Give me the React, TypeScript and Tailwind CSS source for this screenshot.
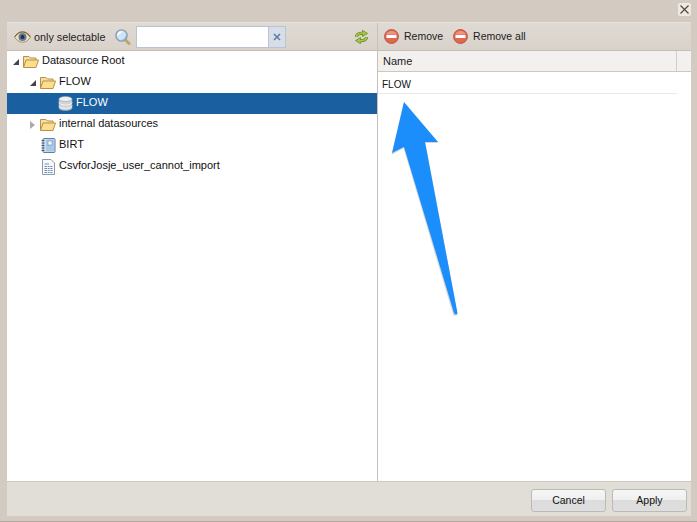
import { ReactNode } from 'react'

function Eye() {
  return (
    <svg width="17" height="12" viewBox="0 0 17 12">
      <path d="M0.5 6C3 2 6 0.8 8.5 0.8S14 2 16.5 6C14 10 11 11.2 8.5 11.2S3 10 0.5 6Z" fill="#f0e2c4" stroke="#a5824e" />
      <circle cx="8.5" cy="6" r="4" fill="#5b7f9c" />
      <circle cx="8.5" cy="6" r="2" fill="#26303a" />
      <path d="M1 5.5C3.5 2 6 1 8.5 1S13.5 2 16 5.5" fill="none" stroke="#7d5f32" strokeWidth="1.2" />
    </svg>
  )
}

function Magnifier() {
  return (
    <svg width="16" height="16" viewBox="0 0 16 16">
      <path d="M10.5 11L14 14.5" stroke="#c9a25e" strokeWidth="3" strokeLinecap="round" />
      <circle cx="6.5" cy="6.5" r="5.6" fill="#cfe4f7" stroke="#8d9cab" strokeWidth="1.4" />
      <path d="M3 6.5A3.5 3.5 0 0 1 6.5 3" fill="none" stroke="#ffffff" strokeWidth="1.4" />
      <path d="M6.5 11.3A4.8 4.8 0 0 0 11.3 6.5" fill="none" stroke="#7fb0de" strokeWidth="1.2" />
    </svg>
  )
}

function Refresh() {
  return (
    <svg width="13" height="14" viewBox="0 0 13 14">
      <path d="M1.5 7C1.5 4.5 3.5 3.2 8 3.2" fill="none" stroke="#5f7d1e" strokeWidth="3" />
      <path d="M7.5 0.3L12.5 3.4 7.5 6.5Z" fill="#a6c93f" stroke="#5f7d1e" strokeWidth="0.7" />
      <path d="M1.5 7C1.5 4.5 3.5 3.2 8 3.2" fill="none" stroke="#a6c93f" strokeWidth="1.7" />
      <path d="M11.5 7C11.5 9.5 9.5 10.8 5 10.8" fill="none" stroke="#5f7d1e" strokeWidth="3" />
      <path d="M5.5 7.5L0.5 10.6 5.5 13.7Z" fill="#a6c93f" stroke="#5f7d1e" strokeWidth="0.7" />
      <path d="M11.5 7C11.5 9.5 9.5 10.8 5 10.8" fill="none" stroke="#a6c93f" strokeWidth="1.7" />
    </svg>
  )
}

function RemoveIcon() {
  return (
    <svg width="15" height="15" viewBox="0 0 15 15">
      <circle cx="7.5" cy="7.5" r="6.9" fill="#e2674f" stroke="#b5533f" />
      <path d="M2 5.5A6 6 0 0 1 13 5.5Z" fill="#ee9480" />
      <rect x="2.5" y="6" width="10" height="3" fill="#ffffff" />
    </svg>
  )
}

function Folder() {
  return (
    <svg width="16" height="13" viewBox="0 0 16 13">
      <path d="M0.5 12V1.5H6L7.5 3H13V5" fill="#f5deA0" stroke="#bb8f45" />
      <path d="M0.5 12.5L3 5H15.5L13 12.5Z" fill="#fbdf8c" stroke="#bb8f45" />
    </svg>
  )
}

function Database() {
  return (
    <svg width="15" height="15" viewBox="0 0 15 15">
      <path d="M1 3V12C1 13.4 4 14.5 7.5 14.5S14 13.4 14 12V3Z" fill="#cfd3d6" stroke="#9ea4a8" strokeWidth="0.6" />
      <ellipse cx="7.5" cy="3" rx="6.5" ry="2.5" fill="#eef0f1" stroke="#9ea4a8" strokeWidth="0.6" />
      <path d="M1 6.5C1 8 4 9 7.5 9S14 8 14 6.5M1 9.7C1 11.2 4 12.2 7.5 12.2S14 11.2 14 9.7" fill="none" stroke="#f4f5f6" />
    </svg>
  )
}

function Report() {
  return (
    <svg width="15" height="15" viewBox="0 0 15 15">
      <rect x="2" y="0.5" width="12" height="14" rx="1" fill="#cfe0f2" stroke="#5e7ea3" />
      <rect x="5" y="1.5" width="8" height="12" fill="#a9c8e8" />
      <rect x="7" y="3" width="4" height="4" fill="#f4f8fc" stroke="#6d8cae" strokeWidth="0.6" />
      <path d="M0.5 2.5H3.5M0.5 5H3.5M0.5 7.5H3.5M0.5 10H3.5M0.5 12.5H3.5" stroke="#44586f" />
    </svg>
  )
}

function CsvFile() {
  return (
    <svg width="13" height="16" viewBox="0 0 13 16">
      <path d="M0.5 0.5H9L12.5 4V15.5H0.5Z" fill="#f8f9fb" stroke="#8d9aac" />
      <path d="M2.5 5H7M2.5 7.5H10.5M2.5 9.5H10.5M2.5 11.5H10.5M2.5 13.5H10.5" stroke="#6f8fb8" />
      <path d="M5.5 7V14M8 7V14" stroke="#f8f9fb" strokeWidth="0.7" />
    </svg>
  )
}

function TreeRow({ indent, toggle, icon, label, selected }: { indent: string; toggle?: 'open' | 'closed'; icon: ReactNode; label: string; selected?: boolean }) {
  return (
    <div className={`h-[21px] flex items-center ${indent} ${selected ? 'bg-[#1a5f9f] text-white' : 'text-[#111]'}`}>
      <span className="w-[11px] flex justify-center shrink-0">
        {toggle === 'open' && <span className="w-0 h-0 border-l-[6px] border-l-transparent border-b-[6px] border-b-[#444]" />}
        {toggle === 'closed' && <span className="w-0 h-0 border-y-[4px] border-y-transparent border-l-[5px] border-l-[#aaa]" />}
      </span>
      <span className="w-[16px] ml-[2px] flex justify-center shrink-0">{icon}</span>
      <span className="ml-[3px] mb-[2px]">{label}</span>
    </div>
  )
}

export default function App() {
  return (
    <div className="relative w-[697px] h-[522px] bg-[#d3cbc2] flex flex-col pl-[7px] pr-[6px] pb-[5px] text-[11px] font-['Liberation_Sans',Arial,sans-serif] overflow-hidden border-b border-[#b3a89c]">
      <div className="h-[22px] shrink-0 flex items-start justify-end pt-[3px]">
        <button className="w-[13px] h-[13px] bg-[#eee9e3] rounded-[2px] flex items-center justify-center">
          <svg width="9" height="9" viewBox="0 0 9 9">
            <path d="M0.5 0.5L8.5 8.5M8.5 0.5L0.5 8.5" stroke="#54483c" strokeWidth="1.2" />
          </svg>
        </button>
      </div>

      <div className="flex-1 min-h-0 flex flex-col border-t border-[#e8e3dd]">
        <div className="flex-1 min-h-0 flex bg-white">
          <div className="w-[371px] flex flex-col border-r border-[#c9c1b8]">
            <div className="h-[28px] shrink-0 flex items-center pl-[7px] pr-[9px] bg-gradient-to-b from-[#e0dad4] to-[#d9d2cb] border-b border-[#c7bdb3] text-[#1c1c1c]">
              <Eye />
              <span className="ml-[3px] mt-[1px] text-[10.8px]">only selectable</span>
              <span className="ml-[10px]"><Magnifier /></span>
              <div className="ml-[5px] h-[22px] w-[150px] flex border border-[#b9c3d2] bg-white">
                <div className="flex-1" />
                <div className="w-[17px] bg-[#d7dee8] border-l border-[#b9c3d2] flex items-center justify-center">
                  <svg width="8" height="8" viewBox="0 0 8 8">
                    <path d="M1 1L7 7M7 1L1 7" stroke="#5c7fa8" strokeWidth="1.6" />
                  </svg>
                </div>
              </div>
              <span className="ml-auto"><Refresh /></span>
            </div>
            <div className="flex-1">
              <TreeRow indent="pl-[3px]" toggle="open" icon={<Folder />} label="Datasource Root" />
              <TreeRow indent="pl-[20px]" toggle="open" icon={<Folder />} label="FLOW" />
              <TreeRow indent="pl-[37px]" icon={<Database />} label="FLOW" selected />
              <TreeRow indent="pl-[20px]" toggle="closed" icon={<Folder />} label="internal datasources" />
              <TreeRow indent="pl-[20px]" icon={<Report />} label="BIRT" />
              <TreeRow indent="pl-[20px]" icon={<CsvFile />} label="CsvforJosje_user_cannot_import" />
            </div>
          </div>

          <div className="flex-1 flex flex-col">
            <div className="h-[28px] shrink-0 flex items-center pl-[6px] bg-gradient-to-b from-[#e0dad4] to-[#d9d2cb] border-b border-[#c7bdb3] text-[#1c1c1c] text-[10.5px]">
              <RemoveIcon />
              <span className="ml-[5px] mt-[1px]">Remove</span>
              <span className="ml-[10px]"><RemoveIcon /></span>
              <span className="ml-[5px] mt-[1px]">Remove all</span>
            </div>
            <div className="h-[21px] shrink-0 flex bg-[#f3f1ef] border-b border-[#cfc7bf] text-[#222]">
              <div className="w-[299px] pl-[5px] flex items-center border-r border-[#d2cdc8]">Name</div>
            </div>
            <div className="w-[299px] h-[22px] pl-[4px] pt-[3px] flex items-center border-b border-[#ebebeb] text-[#111] text-[10px]">FLOW</div>
          </div>
        </div>

        <div className="h-[35px] shrink-0 flex items-start justify-end gap-[6px] pt-[7px] pr-[4px] bg-[#e1ddd7] border-t border-[#cfc8c0] text-[#111] text-[10.5px]">
          <button className="w-[75px] h-[23px] rounded-[3px] border border-[#bdbab6] bg-[linear-gradient(#f6f6f6_0%,#efefef_50%,#dcdcdc_50%,#dedede_100%)]">Cancel</button>
          <button className="w-[75px] h-[23px] rounded-[3px] border border-[#bdbab6] bg-[linear-gradient(#f6f6f6_0%,#efefef_50%,#dcdcdc_50%,#dedede_100%)]">Apply</button>
        </div>
      </div>

      <svg className="absolute left-0 top-0 pointer-events-none" width="697" height="522" viewBox="0 0 697 522">
        <path d="M404 102L439 142L426 142L458 314L454 315L404 147L392 154Z" fill="#8a8a8a" opacity="0.35" transform="translate(-0.5 1)" />
        <path d="M404 102L438 142L425 142L457.5 313Q456 316 454 313L404 147L392 153Z" fill="#1b8efb" />
      </svg>
    </div>
  )
}
